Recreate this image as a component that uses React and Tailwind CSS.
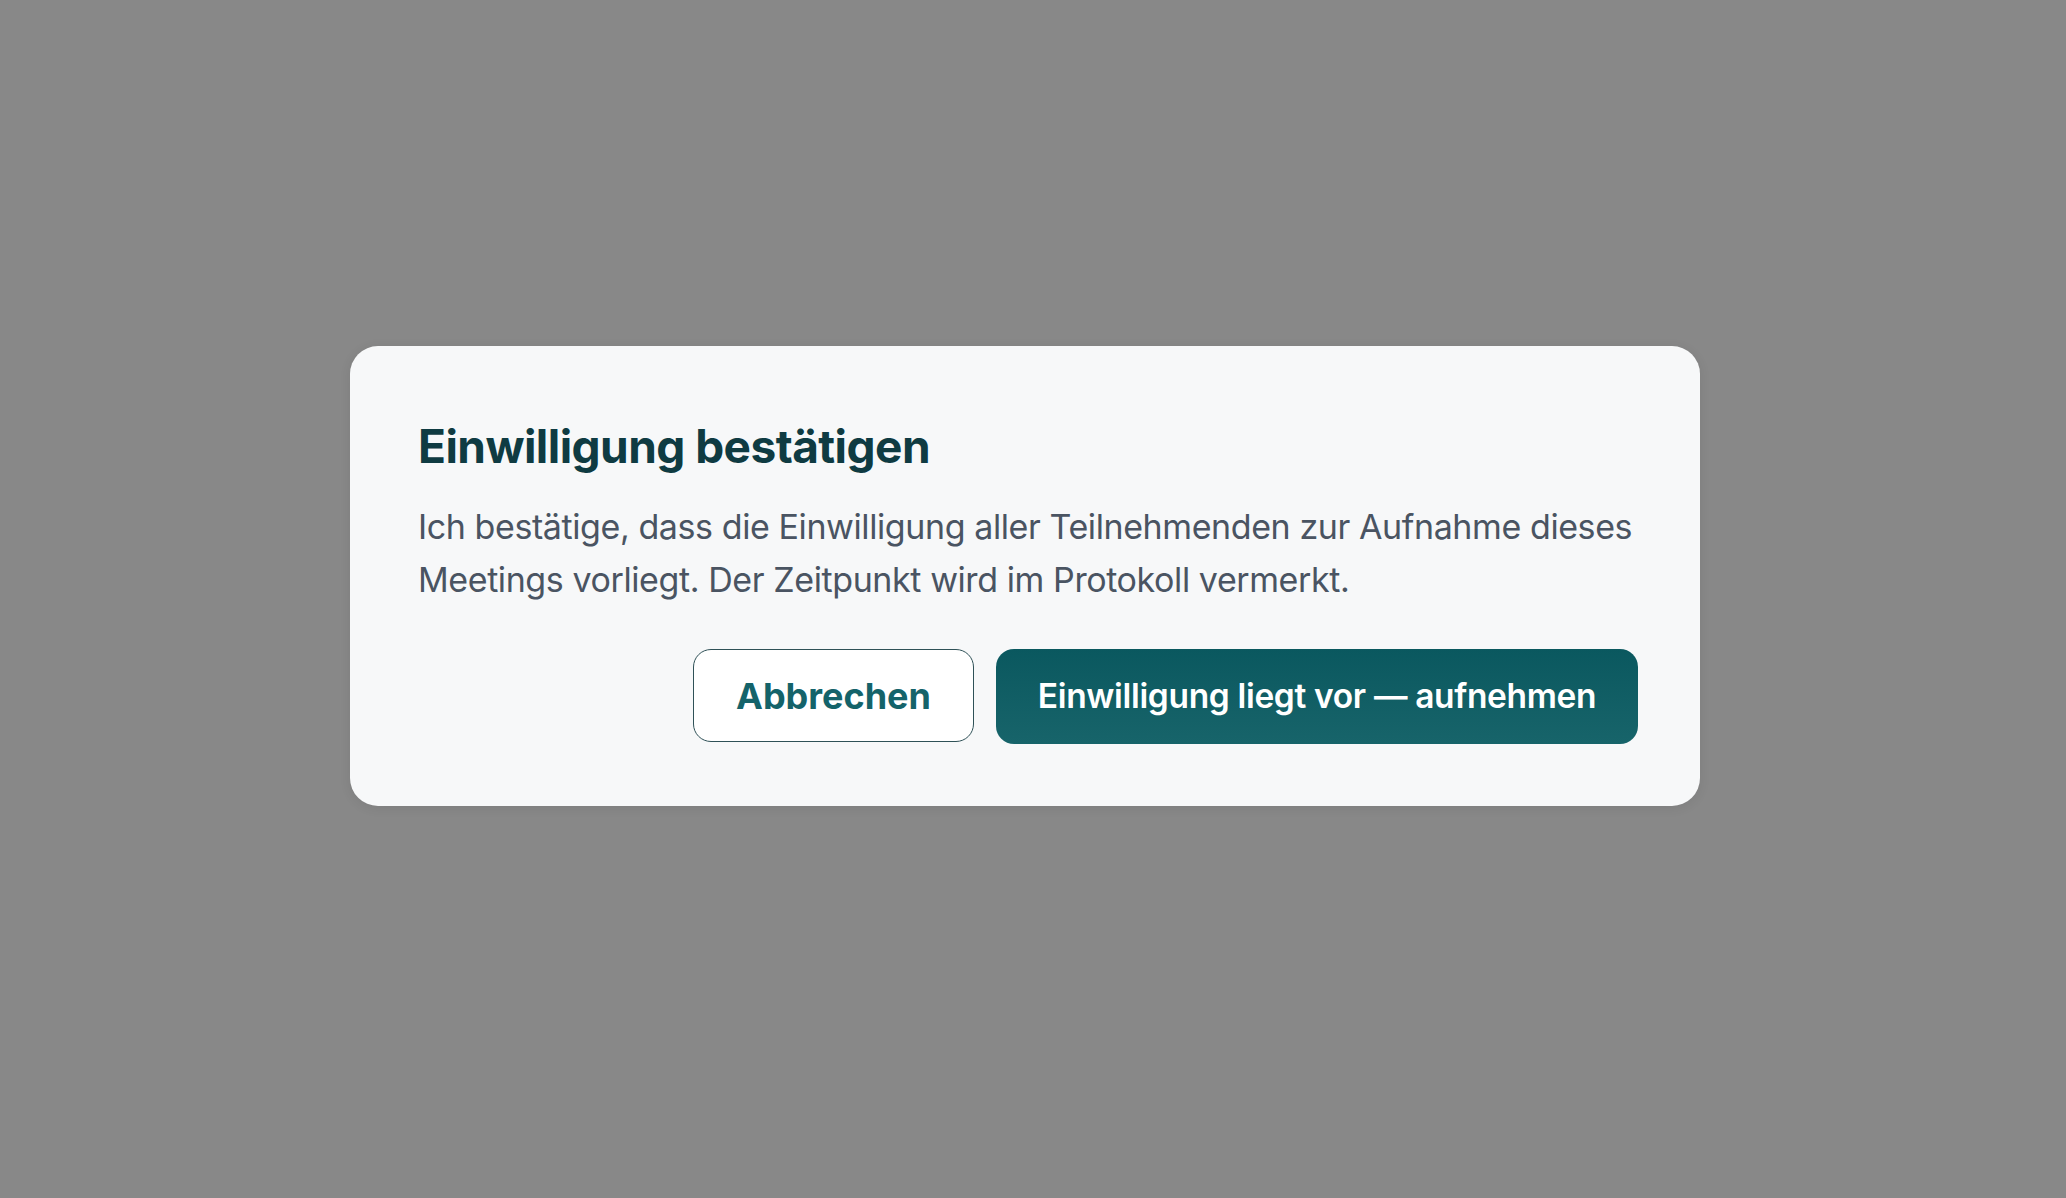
export default function App() {
  return (
    <div className="min-h-screen bg-[#888888] flex justify-center pr-[16px] pt-[346px] font-['Inter',sans-serif]">
      <div className="w-[1350px] h-[460px] rounded-[28px] bg-[#f7f8f9] shadow-[0_2px_12px_rgba(0,0,0,0.08)] pl-[68px] pr-[62px] pt-[73px]">
        <h2 className="text-[46px] leading-[54px] font-bold tracking-[-0.012em] text-[#0f3b42]">
          Einwilligung bestätigen
        </h2>
        <p className="mt-[27px] text-[34px] leading-[53px] text-[#4a5462] tracking-[-0.012em]">
          Ich bestätige, dass die Einwilligung aller Teilnehmenden zur Aufnahme dieses
          <br />
          Meetings vorliegt. Der Zeitpunkt wird im Protokoll vermerkt.
        </p>
        <div className="mt-[43px] flex justify-end gap-[22px]">
          <button className="w-[281px] h-[93px] rounded-[18px] border-[1.5px] border-[#2f5157] bg-white text-[36px] font-bold text-[#14636a]">
            Abbrechen
          </button>
          <button className="w-[642px] h-[95px] rounded-[18px] bg-gradient-to-b from-[#0a585f] to-[#17646a] text-[33.5px] font-semibold text-white tracking-[-0.01em]">
            Einwilligung liegt vor — aufnehmen
          </button>
        </div>
      </div>
    </div>
  )
}
